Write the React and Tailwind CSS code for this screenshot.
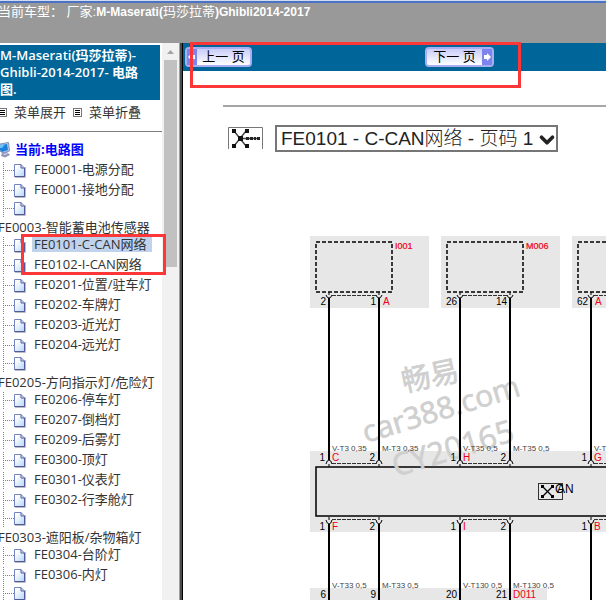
import { ChevronDown } from 'lucide-react';

const treeItems = [
  { code: 'FE0001-电源分配' },
  { code: 'FE0001-接地分配' },
  { code: 'FE0003-智能蓄电池传感器', wrapped: true },
  { code: 'FE0101-C-CAN网络', active: true },
  { code: 'FE0102-I-CAN网络' },
  { code: 'FE0201-位置/驻车灯' },
  { code: 'FE0202-车牌灯' },
  { code: 'FE0203-近光灯' },
  { code: 'FE0204-远光灯' },
  { code: 'FE0205-方向指示灯/危险灯', wrapped: true },
  { code: 'FE0206-停车灯' },
  { code: 'FE0207-倒档灯' },
  { code: 'FE0209-后雾灯' },
  { code: 'FE0300-顶灯' },
  { code: 'FE0301-仪表灯' },
  { code: 'FE0302-行李舱灯' },
  { code: 'FE0303-遮阳板/杂物箱灯', wrapped: true },
  { code: 'FE0304-台阶灯' },
  { code: 'FE0306-内灯' },
  { code: 'FE0307-手套箱灯', wrapped: true },
];

const modules = [
  { x: 127, name: 'I001', pins: ['2', '1'], plug: 'A', plugAt: 1, top: 'C', bottom: 'F', upper: ['V-T3 0,35', 'M-T3 0,35'], lower: ['V-T33 0,5', 'M-T33 0,5'], end: ['6', '9'] },
  { x: 258, name: 'M006', pins: ['26', '14'], top: 'H', bottom: 'I', upper: ['V-T35 0,5', 'M-T35 0,5'], lower: ['V-T130 0,5', 'M-T130 0,5'], end: ['20', '21'], endName: 'D011' },
  { x: 389, name: 'A001', pins: ['62', '63'], plug: 'A', plugAt: 0, top: 'G', bottom: 'B', upper: ['V-T10 0,5', 'M-T10 0,5'] },
];

const PageIcon = () => (
  <svg width="26" height="18" viewBox="0 0 26 18" className="shrink-0" aria-hidden="true">
    <defs>
      <linearGradient id="paper" x1="0" y1="0" x2="1" y2="1">
        <stop offset="0.2" stopColor="#ffffff" />
        <stop offset="1" stopColor="#b4d5fa" />
      </linearGradient>
    </defs>
    <path d="M3.5 1V18M5 9.5H14" stroke="#808080" strokeDasharray="1 1" fill="none" />
    <path d="M15 16.5H25.5V6" stroke="#bbbbc4" fill="none" />
    <path d="M14.5 3.5H21L24.5 7V15.5H14.5Z" fill="url(#paper)" stroke="#7484c2" />
    <path d="M21 3.5V7H24.5V15.5H14.5" fill="none" stroke="#515a99" />
  </svg>
);

const ListIcon = () => (
  <svg width="9" height="9" viewBox="0 0 9 9" className="shrink-0" aria-hidden="true">
    <rect x="0.5" y="0.5" width="8" height="8" fill="#fff" stroke="#777" />
    <path d="M2 2.5H7M2 4.5H7M2 6.5H7" stroke="#000" />
  </svg>
);

const ComputerIcon = () => (
  <svg width="11" height="16" viewBox="0 0 11 16" className="shrink-0" aria-hidden="true">
    <path d="M0 2L8.5 0.5L9.5 9L3 11L0 9Z" fill="#b5c9e3" stroke="#8090b8" />
    <path d="M0 3L7 2L8 8L2 10L0 8Z" fill="#1c80de" />
    <path d="M0 3L5 2.5L2 6H0Z" fill="#6bc4f8" />
    <path d="M2 11L7 10L10 13L5 15.5L1 14Z" fill="#9294bc" />
    <path d="M3 12L7 11L8 12L4 13Z" fill="#d4d6e8" />
  </svg>
);

const NetworkIcon = () => (
  <svg width="35" height="23" viewBox="0 0 35 23" className="shrink-0" aria-hidden="true">
    <path d="M0.5 22V0.5H34.5V22" fill="none" stroke="#777" />
    <path d="M6 4L18 19M18 4L6 19M12 11.5H31" stroke="#444" strokeWidth="1.4" />
    <path d="M4 2h4v4H4zM17 2h4v4h-4zM4 17h4v4H4zM17 17h4v4h-4zM10 9h5v5h-5z" fill="#111" />
    <path d="M18 10h3v3h-3zM22 10h3v3h-3zM26 10h2v3h-2zM29 10h3v3h-3z" fill="#222" />
  </svg>
);

const Arrow = ({ left }) => (
  <span className="flex w-[10px] shrink-0 items-center justify-center self-stretch bg-[#7d84ee]">
    <svg width="8" height="8" viewBox="0 0 8 8" aria-hidden="true">
      <path d={left ? 'M4 0L0 4L4 8V6H7V2H4Z' : 'M4 0L8 4L4 8V6H1V2H4Z'} fill="#fff" />
    </svg>
  </span>
);

const Module = ({ module }) => {
  const { x, name, pins, plug, plugAt, top, bottom, upper, lower, end, endName } = module;
  const wires = [x + 19, x + 69];
  return (
    <g>
      <rect x={x} y="76" width="119" height="72" fill="#e7e7e7" />
      <rect x={x + 6} y="82" width="76" height="50" fill="none" stroke="#000" strokeWidth="1.5" strokeDasharray="4 2" />
      <text x={x + 85} y="89" fontSize="9" fill="#f00014" stroke="#f00014" strokeWidth="0.2">{name}</text>
      <path d={`M${x + 22} 135.5H${x + 66}M${x + 22} 303.5H${x + 66}M${x + 22} 359.5H${x + 66}`} stroke="#333" strokeDasharray="4 1" />
      {wires.map((wx, i) => (
        <g key={wx}>
          <path d={`M${wx} 138V300M${wx} 364V440`} stroke="#000" strokeWidth="2" />
          <path d={`M${wx} 132V135M${wx - 3} 135Q${wx - 2} 138 ${wx} 138T${wx + 3} 135`} fill="none" stroke="#000" />
          <path d={`M${wx - 3} 304Q${wx - 2} 300 ${wx} 300T${wx + 3} 304M${wx} 304V307`} fill="none" stroke="#000" />
          <path d={`M${wx} 357V360M${wx - 3} 360Q${wx - 2} 364 ${wx} 364T${wx + 3} 360`} fill="none" stroke="#000" />
          <text x={wx - 3} y="145" textAnchor="end">{pins[i]}</text>
          <text x={wx - 4} y="301" textAnchor="end">{i + 1}</text>
          <text x={wx - 4} y="370" textAnchor="end">{i + 1}</text>
          <text x={wx + 3} y="291" fontSize="8" fill="#444">{upper[i]}</text>
          {lower && <text x={wx + 3} y="428" fontSize="8" fill="#444">{lower[i]}</text>}
          {end && <text x={wx - 3} y="438" textAnchor="end">{end[i]}</text>}
        </g>
      ))}
      {plug && <text x={wires[plugAt] + 4} y="145" fill="#f00014">{plug}</text>}
      <text x={x + 22} y="301" fill="#f00014">{top}</text>
      <text x={x + 22} y="370" fill="#f00014">{bottom}</text>
      {endName && <text x={x + 72} y="438" fill="#f00014">{endName}</text>}
    </g>
  );
};

const Diagram = () => (
  <svg width="520" height="440" viewBox="0 0 520 440" className="block max-w-none font-['Liberation_Sans',sans-serif]" fontSize="10">
    <rect x="127" y="291" width="393" height="81" fill="#e7e7e7" />
    <rect x="127" y="428" width="237" height="12" fill="#e7e7e7" />
    <rect x="133" y="307" width="400" height="49" fill="none" stroke="#000" strokeWidth="1.5" />
    {/* watermark */}
    <g fill="#cfcfcf" stroke="#cfcfcf" strokeWidth="0.7" fontFamily="'Open Sans', 'Noto Sans CJK SC', sans-serif">
      <text transform="translate(221 232) rotate(-12)" fontSize="29">畅易</text>
      <text transform="translate(183 283) rotate(-17)" fontSize="30">car388.com</text>
      <text transform="translate(213 317) rotate(-17)" fontSize="31">CY20165</text>
    </g>
    {modules.map(module => (
      <Module key={module.name} module={module} />
    ))}
    <rect x="355.5" y="323.5" width="24" height="16" fill="none" stroke="#333" />
    <path d="M359 326L370 337M370 326L359 337" stroke="#000" strokeWidth="1.3" />
    <path d="M358 325h3v3h-3zM368 325h3v3h-3zM358 335h3v3h-3zM368 335h3v3h-3z" />
    <text x="372" y="333" fontSize="12">C</text>
    <text x="374" y="333" fontSize="12">AN</text>
  </svg>
);

const App = () => {
  return (
    <div className="relative flex h-screen flex-col overflow-hidden bg-white font-['Open_Sans','Noto_Sans_CJK_SC',sans-serif] text-[13px] text-[#333]">
      <div className="h-px shrink-0 bg-[#d3dcee]" />
      <header className="h-[42px] shrink-0 border-t-2 border-[#4a73c5] bg-[#999] font-['Liberation_Sans','Noto_Sans_CJK_SC',sans-serif] leading-[17px] text-white">
        <p className="-ml-0.5 whitespace-nowrap">
          当前车型： 厂家:<b className="text-xs font-bold">M-Maserati(</b>玛莎拉蒂<b className="text-xs font-bold">)Ghibli2014-2017</b>
        </p>
      </header>

      <div className="flex min-h-0 flex-1">
        <aside className="flex w-[183px] shrink-0 border-r border-black">
          <nav className="min-w-0 flex-1 overflow-hidden pt-0.5">
            <h1 className="mr-0.5 bg-[#069] py-0.5 pr-2 font-semibold leading-[17px] text-white">
              M-Maserati(玛莎拉蒂)-<br />Ghibli-2014-2017- 电路图.
            </h1>
            <div className="-ml-0.5 flex h-[31px] items-center gap-[7px] whitespace-nowrap pb-1.5">
              <ListIcon />
              <button type="button">菜单展开</button>
              <ListIcon />
              <button type="button">菜单折叠</button>
            </div>
            <hr className="border-[#808080]" />
            <div className="flex h-[27px] items-center gap-1 pt-2 font-bold text-[#0000ff]">
              <ComputerIcon />
              <a href="#circuit">当前:电路图</a>
            </div>
            <ul>
              {treeItems.map(item => (
                <li key={item.code}>
                  {item.wrapped ? (
                    <a href={`#${item.code}`} className="block h-[35px] whitespace-nowrap leading-5">
                      <PageIcon />
                      <span className="-ml-0.5 block">{item.code}</span>
                    </a>
                  ) : (
                    <a href={`#${item.code}`} className="flex h-5 items-center gap-1.5 whitespace-nowrap leading-4">
                      <span className="pt-0.5"><PageIcon /></span>
                      <span className={item.active ? 'bg-[#c0d2ec] pl-0.5 pr-1.5' : 'px-0.5'}>{item.code}</span>
                    </a>
                  )}
                </li>
              ))}
            </ul>
          </nav>
          <div className="flex w-[17px] flex-col items-center bg-[#f1f1f1]">
            <svg width="17" height="17" viewBox="0 0 17 17" aria-hidden="true">
              <path d="M5 11L8.5 7L12 11Z" fill="#a3a3a3" />
            </svg>
            <div className="h-[207px] w-[13px] bg-[#c1c1c1]" />
          </div>
          <div className="w-[3px] border-l border-[#a0a0a0] bg-[#4a4a4a]" />
        </aside>

        <main className="min-w-0 flex-1 overflow-hidden">
          <div className="flex h-7 items-center bg-[#069] pl-0.5 font-['Liberation_Sans','Noto_Sans_CJK_SC',sans-serif] text-black">
            <button type="button" className="flex h-5 w-[67px] items-center rounded-sm border-2 border-[#a9aef0] bg-linear-to-b from-[#c9cdf8] to-white">
              <Arrow left />
              <span className="flex-1 whitespace-nowrap">上一 页</span>
            </button>
            <button type="button" className="ml-[173px] flex h-5 w-[69px] items-center rounded-sm border-2 border-[#a9aef0] bg-linear-to-b from-[#c9cdf8] to-white">
              <span className="flex-1 whitespace-nowrap">下一 页</span>
              <Arrow />
            </button>
          </div>
          <hr className="ml-10 mt-[34px] border-t-2 border-[#a5a5a5]" />
          <div className="ml-[45px] mt-[18px] flex items-center gap-3 font-['Liberation_Sans','Noto_Sans_CJK_SC',sans-serif]">
            <NetworkIcon />
            <div className="relative">
              <select
                aria-label="页码"
                className="block h-[27px] w-[283px] appearance-none border-2 border-[#767676] bg-white pl-1 text-[19px] font-light leading-6 text-[#222]"
              >
                <option>FE0101 - C-CAN网络 - 页码 1</option>
              </select>
              <ChevronDown size={22} strokeWidth={4} className="pointer-events-none absolute right-0 top-1 text-[#222]" />
            </div>
          </div>
          <div className="mt-2">
            <Diagram />
          </div>
        </main>
      </div>

      {/* highlight frames */}
      <div className="pointer-events-none absolute left-[190px] top-[42px] h-[46px] w-[331px] border-3 border-[#fd3737]" />
      <div className="pointer-events-none absolute left-[21px] top-[234px] h-[41px] w-[145px] border-3 border-[#fd3737]" />
    </div>
  );
};

export default App;
